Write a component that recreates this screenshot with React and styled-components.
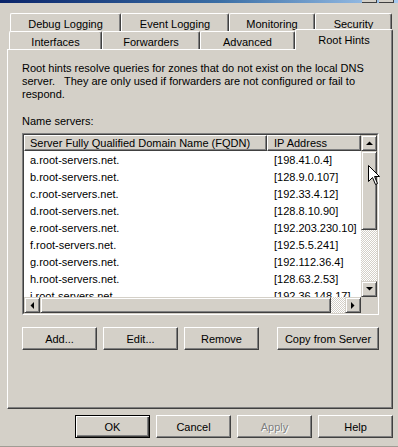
import React from "react";
import styled, { createGlobalStyle } from "styled-components";

const GlobalStyle = createGlobalStyle`
  html, body {
    margin: 0;
    padding: 0;
    background: #d4d0c8;
  }
  * {
    box-sizing: border-box;
  }
`;

const Window = styled.div`
  position: relative;
  width: 398px;
  height: 447px;
  overflow: hidden;
  background: #d4d0c8;
  font-family: "Liberation Sans", Arial, sans-serif;
  font-size: 11px;
  color: #000;
  border-bottom: 1px solid #a09c94;
`;

const TitleStrip = styled.div`
  height: 3px;
  display: flex;
  justify-content: flex-end;
  gap: 2px;
  padding-right: 4px;
  background: linear-gradient(to right, #0a246a, #3a6ea5 55%, #a6caf0);
`;

const TitleBtn = styled.div`
  width: 15px;
  height: 3px;
  background: #d4d0c8;
  border-bottom: 1px solid #404040;
  border-right: 1px solid #404040;
`;

const Dialog = styled.div`
  padding: 10px 5px 0 7px;
`;

const TabRow = styled.div`
  display: flex;
  align-items: flex-end;
  height: 18px;
  padding-left: ${(p) => p.$indent}px;
`;

const Tab = styled.div`
  position: relative;
  width: ${(p) => p.$w}px;
  height: ${(p) => (p.$active ? 21 : 18)}px;
  margin-bottom: ${(p) => (p.$active ? -1 : 0)}px;
  z-index: ${(p) => (p.$active ? 2 : 1)};
  display: flex;
  align-items: center;
  justify-content: center;
  padding-top: ${(p) => (p.$active ? 0 : 2)}px;
  background: #d4d0c8;
  border-left: 1px solid #fff;
  border-top: 1px solid #fff;
  border-right: 1px solid #404040;
  border-top-left-radius: 2px;
  border-top-right-radius: 2px;
  box-shadow: inset -1px 0 #808080;
  white-space: nowrap;
`;

const Panel = styled.div`
  height: 360px;
  padding: 12px 13px 0 14px;
  border-left: 1px solid #fff;
  border-top: 1px solid #fff;
  border-right: 1px solid #404040;
  border-bottom: 1px solid #404040;
  box-shadow: inset -1px -1px #808080;
`;

const Intro = styled.p`
  margin: 0;
  line-height: 13px;
  white-space: pre;
`;

const Label = styled.div`
  margin-top: 14px;
  line-height: 13px;
`;

const ListOuter = styled.div`
  margin-top: 5px;
  width: 357px;
  height: 182px;
  border: 1px solid;
  border-color: #808080 #fff #fff #808080;
`;

const ListInner = styled.div`
  height: 100%;
  border: 1px solid;
  border-color: #404040 #d4d0c8 #d4d0c8 #404040;
  background: #fff;
  display: grid;
  grid-template-columns: 1fr 16px;
  grid-template-rows: 1fr 16px;
  overflow: hidden;
`;

const ListBody = styled.div`
  overflow: hidden;
`;

const HeaderRow = styled.div`
  display: grid;
  grid-template-columns: 243px 1fr;
  height: 16px;
`;

const HeaderCell = styled.div`
  display: flex;
  align-items: center;
  padding-left: ${(p) => p.$pad}px;
  background: #d4d0c8;
  border: 1px solid;
  border-color: #fff #404040 #404040 #fff;
  box-shadow: inset -1px -1px #808080;
  white-space: nowrap;
`;

const Row = styled.div`
  display: grid;
  grid-template-columns: 243px 1fr;
  height: 17px;
  align-items: center;
  white-space: nowrap;
`;

const Cell = styled.div`
  padding-left: ${(p) => p.$pad}px;
`;

const raised = `
  background: #d4d0c8;
  border: 1px solid;
  border-color: #d4d0c8 #404040 #404040 #d4d0c8;
  box-shadow: inset 1px 1px #fff, inset -1px -1px #808080;
`;

const ScrollBar = styled.div`
  display: flex;
  flex-direction: ${(p) => (p.$vertical ? "column" : "row")};
`;

const ArrowBtn = styled.div`
  ${raised}
  flex: 0 0 16px;
  display: flex;
  align-items: center;
  justify-content: center;
`;

const Thumb = styled.div`
  ${raised}
  flex: 0 0 ${(p) => p.$size}px;
`;

const Track = styled.div`
  flex: 1;
  background: repeating-conic-gradient(#fff 0 25%, #d4d0c8 0 50%) 0 0 / 2px 2px;
`;

const Corner = styled.div`
  background: #d4d0c8;
`;

const ButtonRow = styled.div`
  display: flex;
  gap: 6px;
  margin-top: ${(p) => p.$top}px;
  justify-content: ${(p) => (p.$right ? "flex-end" : "flex-start")};
`;

const Button = styled.div`
  width: ${(p) => p.$w || 75}px;
  height: 23px;
  margin-left: ${(p) => (p.$push ? "auto" : "0")};
  display: flex;
  align-items: center;
  justify-content: center;
  background: #d4d0c8;
  border: 1px solid;
  border-color: ${(p) => (p.$default ? "#000" : "#fff #404040 #404040 #fff")};
  box-shadow: ${(p) =>
    p.$default
      ? "inset 1px 1px #fff, inset -1px -1px #404040, inset -2px -2px #808080"
      : "inset -1px -1px #808080"};
  color: ${(p) => (p.$disabled ? "#808080" : "#000")};
  text-shadow: ${(p) => (p.$disabled ? "1px 1px 0 #fff" : "none")};
  white-space: nowrap;
`;

const Cursor = styled.svg`
  position: absolute;
  left: 368px;
  top: 165px;
`;

const Arrow = ({ dir }) => {
  const pts = {
    up: "0,4 7,4 3.5,0.5",
    down: "0,0 7,0 3.5,3.5",
    left: "4,0 4,7 0.5,3.5",
    right: "0,0 0,7 3.5,3.5",
  }[dir];
  const vert = dir === "up" || dir === "down";
  return (
    <svg width={vert ? 7 : 4} height={vert ? 4 : 7} viewBox={vert ? "0 0 7 4" : "0 0 4 7"}>
      <polygon points={pts} fill="#000" />
    </svg>
  );
};

const servers = [
  ["a.root-servers.net.", "[198.41.0.4]"],
  ["b.root-servers.net.", "[128.9.0.107]"],
  ["c.root-servers.net.", "[192.33.4.12]"],
  ["d.root-servers.net.", "[128.8.10.90]"],
  ["e.root-servers.net.", "[192.203.230.10]"],
  ["f.root-servers.net.", "[192.5.5.241]"],
  ["g.root-servers.net.", "[192.112.36.4]"],
  ["h.root-servers.net.", "[128.63.2.53]"],
  ["i.root-servers.net.", "[192.36.148.17]"],
];

export default function App() {
  return (
    <Window>
      <GlobalStyle />
      <TitleStrip>
        <TitleBtn />
        <TitleBtn />
      </TitleStrip>
      <Dialog>
        <TabRow $indent={3}>
          <Tab $w={111}>Debug Logging</Tab>
          <Tab $w={108}>Event Logging</Tab>
          <Tab $w={86}>Monitoring</Tab>
          <Tab $w={77}>Security</Tab>
        </TabRow>
        <TabRow $indent={2}>
          <Tab $w={93}>Interfaces</Tab>
          <Tab $w={98}>Forwarders</Tab>
          <Tab $w={95}>Advanced</Tab>
          <Tab $w={98} $active>
            Root Hints
          </Tab>
        </TabRow>
        <Panel>
          <Intro>
            {"Root hints resolve queries for zones that do not exist on the local DNS\nserver.   They are only used if forwarders are not configured or fail to\nrespond."}
          </Intro>
          <Label>Name servers:</Label>
          <ListOuter>
            <ListInner>
              <ListBody>
                <HeaderRow>
                  <HeaderCell $pad={5}>Server Fully Qualified Domain Name (FQDN)</HeaderCell>
                  <HeaderCell $pad={6}>IP Address</HeaderCell>
                </HeaderRow>
                {servers.map(([name, ip]) => (
                  <Row key={name}>
                    <Cell $pad={6}>{name}</Cell>
                    <Cell $pad={7}>{ip}</Cell>
                  </Row>
                ))}
              </ListBody>
              <ScrollBar $vertical>
                <ArrowBtn>
                  <Arrow dir="up" />
                </ArrowBtn>
                <Thumb $size={79} />
                <Track />
                <ArrowBtn>
                  <Arrow dir="down" />
                </ArrowBtn>
              </ScrollBar>
              <ScrollBar>
                <ArrowBtn>
                  <Arrow dir="left" />
                </ArrowBtn>
                <Thumb $size={291} />
                <Track />
                <ArrowBtn>
                  <Arrow dir="right" />
                </ArrowBtn>
              </ScrollBar>
              <Corner />
            </ListInner>
          </ListOuter>
          <ButtonRow $top={12}>
            <Button>Add...</Button>
            <Button>Edit...</Button>
            <Button>Remove</Button>
            <Button $w={102} $push>
              Copy from Server
            </Button>
          </ButtonRow>
        </Panel>
        <ButtonRow $top={6} $right>
          <Button $default>OK</Button>
          <Button>Cancel</Button>
          <Button $disabled>Apply</Button>
          <Button>Help</Button>
        </ButtonRow>
      </Dialog>
      <Cursor width="13" height="21" viewBox="0 0 13 21">
        <path
          d="M0.5 0.5 L0.5 16.5 L4.5 12.5 L7.5 19.5 L9.5 18.5 L6.5 11.5 L11.5 11.5 Z"
          fill="#fff"
          stroke="#000"
          strokeWidth="1"
        />
      </Cursor>
    </Window>
  );
}
